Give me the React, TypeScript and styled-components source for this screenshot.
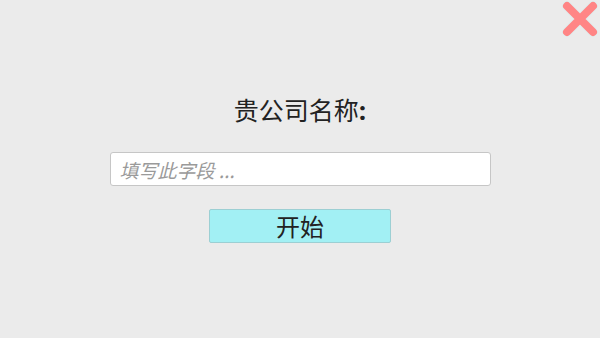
import React from "react";
import styled, { createGlobalStyle } from "styled-components";

const GlobalStyle = createGlobalStyle`
  html, body {
    margin: 0;
    padding: 0;
    background: #ebebeb;
  }
  body {
    font-family: "Roboto", "Noto Sans CJK SC", sans-serif;
  }
`;

function CloseIcon() {
  return (
    <svg width="36" height="36" viewBox="0 0 36 36">
      <g strokeLinecap="round">
        <path d="M5 5 L31 31 M31 5 L5 31" stroke="#dfeeee" strokeWidth="10" />
        <path d="M5 5 L31 31 M31 5 L5 31" stroke="#ff8585" strokeWidth="8" />
      </g>
    </svg>
  );
}

function App() {
  return (
    <>
      <GlobalStyle />
      <Screen>
        <CloseButton aria-label="close">
          <CloseIcon />
        </CloseButton>
        <Form>
          <Label>
            贵公司名称<Colon>:</Colon>
          </Label>
          <Field placeholder="填写此字段 ..." />
          <StartButton>开始</StartButton>
        </Form>
      </Screen>
    </>
  );
}

const Screen = styled.div`
  position: relative;
  width: 600px;
  height: 338px;
  overflow: hidden;
  background: #ebebeb;
`;

const CloseButton = styled.button`
  position: absolute;
  top: 1px;
  right: 2px;
  padding: 0;
  border: none;
  background: none;
  line-height: 0;
`;

const Form = styled.div`
  display: flex;
  flex-direction: column;
  align-items: center;
  padding-top: 94px;
`;

const Label = styled.div`
  font-family: "Noto Sans CJK SC", sans-serif;
  font-size: 25px;
  line-height: 30px;
  color: #222;
`;

const Colon = styled.span`
  font-family: "Roboto", sans-serif;
  font-weight: 900;
`;

const Field = styled.input`
  box-sizing: border-box;
  width: 381px;
  height: 34px;
  margin: 25px 0 0;
  padding: 0 9px;
  border: 1px solid #c6c6c6;
  border-radius: 3px;
  background: #fff;
  font-family: "Noto Sans CJK SC", sans-serif;
  font-size: 19px;
  outline: none;

  &::placeholder {
    color: #9a9a9a;
    font-style: italic;
  }
`;

const StartButton = styled.button`
  box-sizing: border-box;
  width: 182px;
  height: 34px;
  margin: 23px 0 0;
  padding: 0;
  border: 1px solid #9ccfd3;
  border-radius: 2px;
  background: #a2f0f4;
  font-family: "Noto Sans CJK SC", sans-serif;
  font-size: 24px;
  line-height: 32px;
  color: #222;
`;

export default App;
